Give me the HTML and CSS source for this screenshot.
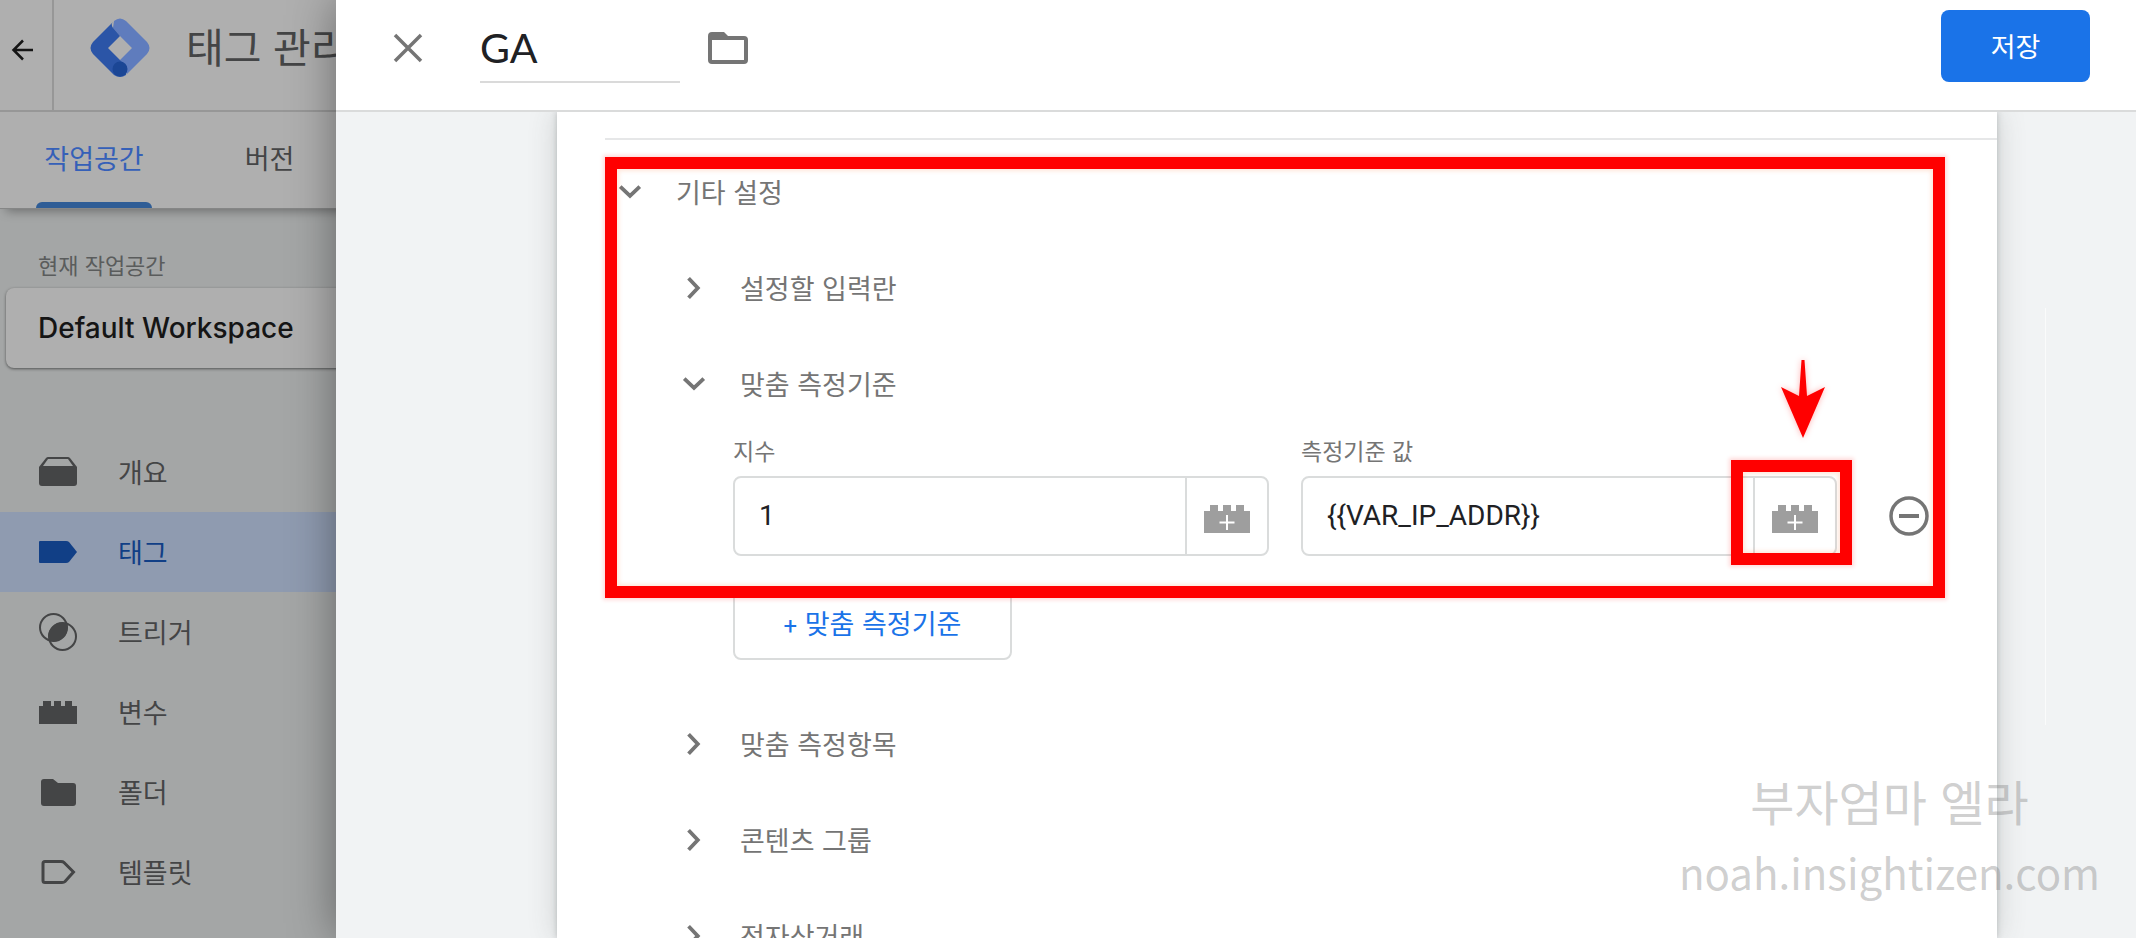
FILE: index.html
```html
<!DOCTYPE html>
<html lang="ko">
<head>
<meta charset="utf-8">
<title>태그 관리자</title>
<link rel="stylesheet" href="styles.css">
</head>
<body>
<svg class="sprite" aria-hidden="true">
  <symbol id="chevron" viewBox="0 0 24 24"><path d="M7 3l8.500 9L7 21" fill="none" stroke="currentColor" stroke-width="3.500"/></symbol>
  <symbol id="brick" viewBox="0 0 46 28"><path d="M0 6h6V0h8v6h5V0h8v6h5V0h8v6h6v22H0z" fill="currentColor"/><path d="M23 10v15M15.500 17.500h15" stroke="#fff" stroke-width="2"/></symbol>
</svg>
<div class="app">
  <header class="topbar">
    <button class="back" aria-label="뒤로">
      <svg width="24" height="24" viewBox="0 0 24 24"><path d="M22 12H3M12 2.500L2.500 12l9.500 9.500" fill="none" stroke="currentColor" stroke-width="2.500"/></svg>
    </button>
    <svg class="logo" width="60" height="60" viewBox="0 0 60 60">
      <path d="M24 3q6-5 12 0L57 24q5 6 0 12L37 56l-7-14 12-12-12-12-7-8z" fill="#5f7cbd"/>
      <path d="M23 4L3 24q-5 6 0 12l21 21q6 4 12 0l1-8-7-7-12-12 12-12-6-7q-4-4-1-7z" fill="#2b55a7"/>
      <circle cx="30" cy="51" r="7.500" fill="#1b4695"/>
    </svg>
    <span class="product">태그 관리자</span>
  </header>
  <nav class="tabs">
    <a class="tab tab-active" href="#">작업공간</a>
    <a class="tab" href="#">버전</a>
  </nav>
  <aside class="sidebar">
    <div class="ws-label">현재 작업공간</div>
    <button class="workspace">Default Workspace</button>
    <nav class="menu">
      <a class="item" href="#"><svg class="icon" viewBox="0 0 40 40"><path d="M1 15L8 6q1-1 2-1h20q1 0 2 1l7 9v16q0 3-3 3H4q-3 0-3-3z" fill="currentColor"/><path d="M10 7h20l5 7H5z" fill="#a4a6a6"/></svg>개요</a>
      <a class="item item-active" href="#"><svg class="icon" viewBox="0 0 40 40"><path d="M1 10q0-1 1-1h26q2 0 3 1l8 10-8 10q-1 1-3 1H2q-1 0-1-1z" fill="currentColor"/></svg>태그</a>
      <a class="item" href="#"><svg class="icon" viewBox="0 0 40 40"><g fill="none" stroke="currentColor" stroke-width="2"><circle cx="15.500" cy="15.500" r="13.500"/><circle cx="24.500" cy="24.500" r="13.500"/></g><path d="M28.900 11.700A13.500 13.500 0 0 0 11.100 28.300 13.500 13.500 0 0 0 28.900 11.700z" fill="currentColor"/></svg>트리거</a>
      <a class="item" href="#"><svg class="icon" viewBox="0 0 40 40"><path d="M1 14h4V9h8v5h3V9h7v5h4V9h7v5h5v18H1z" fill="currentColor"/></svg>변수</a>
      <a class="item" href="#"><svg class="icon" viewBox="0 0 40 40"><path d="M3 10q0-3 3-3h9l5 4h15q3 0 3 3v17q0 3-3 3H6q-3 0-3-3z" fill="currentColor"/></svg>폴더</a>
      <a class="item" href="#"><svg class="icon" viewBox="0 0 40 40"><path d="M7 9.500h16q2 0 3 1L35.500 20 27 29.500q-1 1-3 1H7q-2 0-2-2v-17q0-2 2-2z" fill="none" stroke="currentColor" stroke-width="3"/></svg>템플릿</a>
    </nav>
  </aside>
</div>

<main class="drawer">
  <header class="drawer-head">
    <button class="plain close" aria-label="닫기"><svg width="30" height="30" viewBox="0 0 30 30"><path d="M2 2l26 26M28 2L2 28" stroke="currentColor" stroke-width="3.500"/></svg></button>
    <input class="name" type="text" value="GA" aria-label="태그 이름">
    <button class="plain" aria-label="폴더"><svg width="40" height="34" viewBox="0 0 40 34"><path d="M0 5q0-4 4-4h12l4 4h16q4 0 4 4v20q0 4-4 4H4q-4 0-4-4zM4 9v20h32V9z" fill="currentColor" fill-rule="evenodd"/></svg></button>
    <button class="save">저장</button>
  </header>
  <div class="drawer-body">
    <section class="card">
      <div class="panel">
        <div class="group">
          <button class="row row-top"><svg class="chev open"><use href="#chevron"/></svg>기타 설정</button>
          <button class="row"><svg class="chev"><use href="#chevron"/></svg>설정할 입력란</button>
          <button class="row"><svg class="chev open"><use href="#chevron"/></svg>맞춤 측정기준</button>
          <div class="fields">
            <div class="field">
              <label for="idx">지수</label>
              <div class="box"><input id="idx" type="text" value="1"><button class="addon" aria-label="변수 선택"><svg width="46" height="28"><use href="#brick"/></svg></button></div>
            </div>
            <div class="field">
              <label for="val">측정기준 값</label>
              <div class="box"><input id="val" type="text" value="{{VAR_IP_ADDR}}"><button class="addon" aria-label="변수 선택"><svg width="46" height="28"><use href="#brick"/></svg></button>
                <span class="mark mark-small"></span>
                <svg class="arrow" width="56" height="88" viewBox="0 0 56 88"><path d="M26.500 5h3L32 41l18-9-22 51L6 32l18 9z" fill="red"/></svg>
              </div>
            </div>
            <button class="plain remove" aria-label="삭제"><svg width="40" height="40" viewBox="0 0 40 40"><circle cx="20" cy="20" r="18" fill="none" stroke="currentColor" stroke-width="3.500"/><path d="M10 20h20" stroke="currentColor" stroke-width="4"/></svg></button>
          </div>
          <span class="mark mark-large"></span>
        </div>
        <button class="add"><span class="plus">+</span> 맞춤 측정기준</button>
        <button class="row"><svg class="chev"><use href="#chevron"/></svg>맞춤 측정항목</button>
        <button class="row"><svg class="chev"><use href="#chevron"/></svg>콘텐츠 그룹</button>
        <button class="row"><svg class="chev"><use href="#chevron"/></svg>전자상거래</button>
      </div>
    </section>
    <span class="rail"></span>
  </div>
  <div class="watermark"><span>부자엄마 엘라</span><span class="site">noah.insightizen.com</span></div>
</main>
</body>
</html>
```
FILE: styles.css
```css
* { box-sizing: border-box; }
body {
  margin: 0;
  height: 100vh;
  overflow: hidden;
  position: relative;
  font-family: "Noto Sans CJK KR", sans-serif;
  font-size: 27px;
  line-height: 40px;
  color: #757575;
}
button, input { font: inherit; color: inherit; border: 0; padding: 0; background: none; }
a { color: inherit; text-decoration: none; }
svg { flex: none; display: block; }
.sprite { position: absolute; width: 0; height: 0; }

.app { display: flex; flex-direction: column; height: 100%; background: #a4a6a6; color: #444546; }
.topbar { display: flex; align-items: center; height: 112px; background: #afafaf; border-bottom: 2px solid #979797; }
.back { width: 54px; height: 110px; padding: 0 0 10px 11px; border-right: 2px solid #979797; color: #151515; display: flex; align-items: center; }
.logo { margin: 0 36px 14px 36px; }
.product { font-size: 41px; padding-bottom: 20px; white-space: nowrap; }
.tabs { display: flex; height: 97px; padding: 0 36px; gap: 64px; background: #afafaf; border-bottom: 1px solid #858686; box-shadow: 0 8px 10px -6px rgba(0, 0, 0, .35); }
.tab { width: 116px; padding-top: 26px; text-align: center; white-space: nowrap; }
.tab + .tab { width: 107px; }
.tab-active { color: #3560b8; position: relative; }
.tab-active::after { content: ""; position: absolute; left: 0; right: 0; bottom: 0; height: 6px; border-radius: 6px 6px 0 0; background: #2f5d96; }
.sidebar { display: flex; flex-direction: column; padding-top: 35px; }
.ws-label { padding-left: 38px; font-size: 22px; color: #5a5c5c; }
.workspace { height: 80px; margin: 4px 0 64px 6px; padding-left: 32px; border-radius: 8px; background: #afafaf; box-shadow: 0 1px 3px rgba(0, 0, 0, .5); text-align: left; font-family: Inter, sans-serif; font-size: 28px; font-weight: 500; color: #151515; }
.item { display: flex; align-items: center; gap: 40px; height: 80px; padding: 0 38px; line-height: 38px; }
.icon { width: 40px; height: 40px; }
.item-active { background: #8f9bb0; color: #113f86; }

.drawer { position: absolute; top: 0; right: 0; bottom: 0; left: 336px; display: flex; flex-direction: column; background: #f1f3f4; box-shadow: 0 0 44px rgba(0, 0, 0, .4); overflow: hidden; }
.drawer-head { flex: none; display: flex; align-items: center; height: 112px; padding: 0 46px 14px 57px; background: #fff; border-bottom: 2px solid #dadbdb; }
.plain { display: flex; align-items: center; }
.name { width: 200px; height: 70px; margin: 0 28px 13px 57px; border-bottom: 2px solid #dadada; outline: 0; font-family: Lato, sans-serif; font-size: 41px; color: #202124; align-self: flex-end; }
.save { width: 149px; height: 72px; margin: 0 0 4px auto; border-radius: 8px; background: #1a73e8; color: #fff; }
.drawer-body { position: relative; flex: 1; min-height: 0; padding: 0 139px 0 221px; overflow: hidden; }
.card { height: 100%; padding: 26px 0 0 48px; background: #fff; box-shadow: 0 0 28px rgba(60, 64, 67, .2), 0 0 6px rgba(60, 64, 67, .25); overflow: hidden; }
.panel { display: flex; flex-direction: column; align-items: stretch; border-top: 2px solid #e6e7e8; padding-top: 4px; }
.group { position: relative; }
.row { display: flex; align-items: center; gap: 33px; width: 100%; height: 96px; padding-left: 76px; text-align: left; flex: none; }
.row-top { padding-left: 12px; }
.chev { width: 26px; height: 26px; }
.open { transform: rotate(90deg); }
.fields { display: flex; align-items: flex-end; gap: 32px; padding: 0 68px 0 128px; }
.field { flex: 1; min-width: 0; }
.field label { display: block; font-size: 23px; line-height: 36px; margin-bottom: 8px; }
.box { position: relative; display: flex; height: 80px; border: 2px solid #dadcdc; border-radius: 8px; }
.box input { flex: 1; min-width: 0; padding: 0 24px; outline: 0; font-family: Roboto, sans-serif; font-size: 28px; color: #202124; }
.addon { display: flex; align-items: center; justify-content: center; width: 82px; padding-top: 6px; border-left: 2px solid #dadcdc; color: #9e9e9e; }
.remove { height: 80px; margin-left: 20px; }
.mark { position: absolute; border: 12px solid #f00; box-shadow: 0 0 4px 2px rgba(255, 0, 0, .15), inset 0 0 4px 2px rgba(255, 90, 0, .15); pointer-events: none; }
.mark-large { top: 13px; right: 52px; bottom: -42px; left: 0; }
.mark-small { top: -18px; right: -17px; width: 121px; height: 105px; }
.arrow { position: absolute; right: 4px; bottom: 111px; filter: drop-shadow(0 0 3px rgba(255, 0, 0, .3)); }
.add { flex: none; width: 279px; height: 72px; margin: 32px 0 36px 128px; border: 2px solid #dadcdc; border-radius: 8px; color: #1a73e8; }
.plus { font-family: Roboto, sans-serif; font-size: 24px; }
.rail { position: absolute; right: 90px; top: 196px; width: 1px; height: 417px; background: #fafbfb; }
.watermark { position: absolute; right: 36px; bottom: 30px; display: flex; flex-direction: column; align-items: center; font-size: 48px; line-height: 72px; color: rgba(120, 120, 120, .36); }
.site { font-size: 42px; }
```
